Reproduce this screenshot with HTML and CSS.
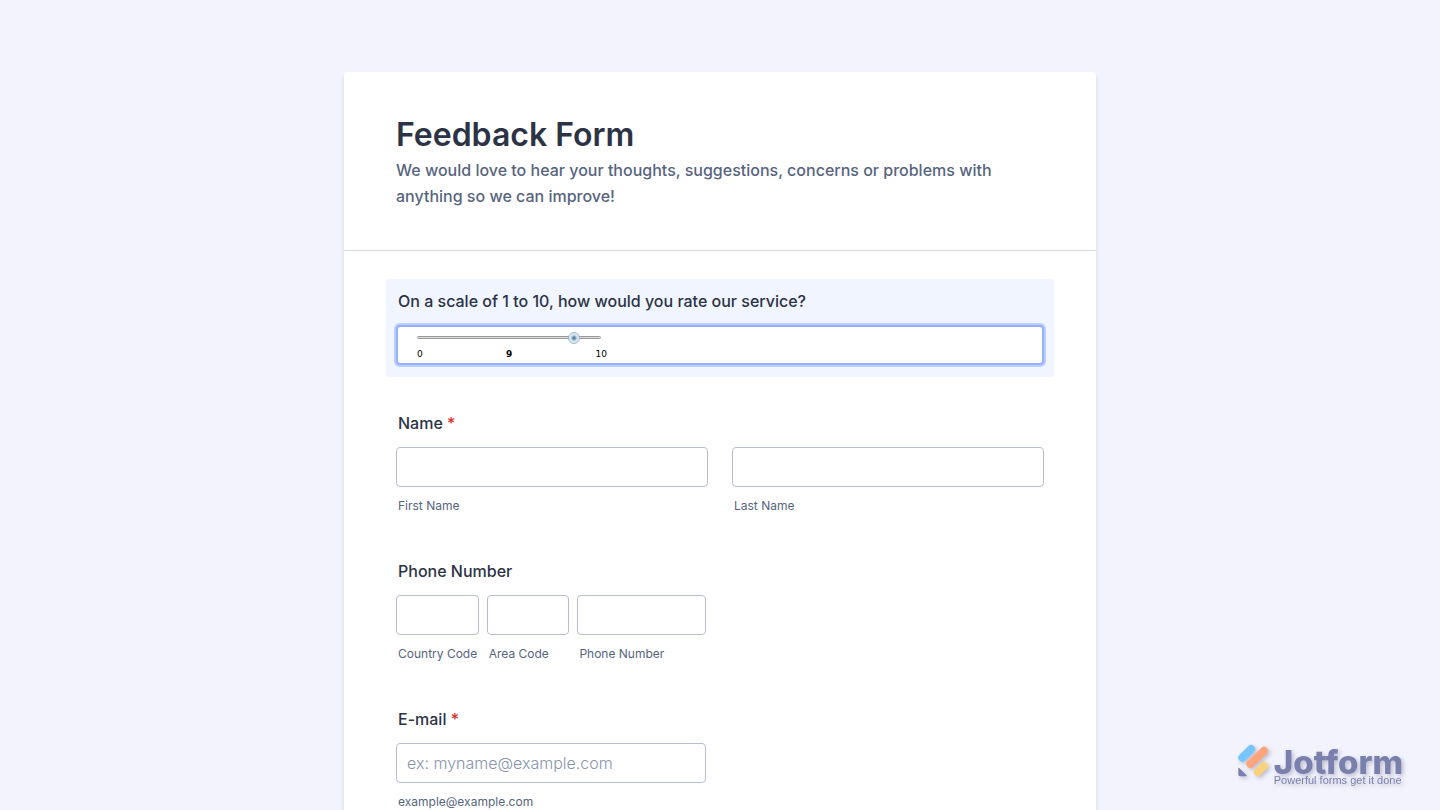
FILE: index.html
```html
<!DOCTYPE html>
<html lang="en">

<head>
    <meta charset="UTF-8">
    <meta name="viewport" content="width=device-width, initial-scale=1.0">
    <title>Feedback Form</title>
    <link rel="stylesheet" href="styles.css">
</head>

<body>
    <form class="form">
        <header class="form-header">
            <h1>Feedback Form</h1>
            <p>We would love to hear your thoughts, suggestions, concerns or problems with anything so we can improve!</p>
        </header>
        <div class="form-body">
            <div class="question active">
                <label class="question-label" for="rating">On a scale of 1 to 10, how would you rate our service?</label>
                <div class="slider-box">
                    <input type="range" class="slider" id="rating" min="0" max="10" step="0.1" value="8.8">
                    <div class="slider-values">
                        <span>0</span>
                        <output for="rating" id="rating-value">9</output>
                        <span>10</span>
                    </div>
                </div>
            </div>

            <div class="question" role="group" aria-labelledby="name-label">
                <div class="question-label" id="name-label">Name <span class="required">*</span></div>
                <div class="fields name-fields">
                    <div class="field">
                        <input type="text" id="first-name" required>
                        <label for="first-name">First Name</label>
                    </div>
                    <div class="field">
                        <input type="text" id="last-name" required>
                        <label for="last-name">Last Name</label>
                    </div>
                </div>
            </div>

            <div class="question" role="group" aria-labelledby="phone-label">
                <div class="question-label" id="phone-label">Phone Number</div>
                <div class="fields phone-fields">
                    <div class="field">
                        <input type="tel" id="country-code">
                        <label for="country-code">Country Code</label>
                    </div>
                    <div class="field">
                        <input type="tel" id="area-code">
                        <label for="area-code">Area Code</label>
                    </div>
                    <div class="field">
                        <input type="tel" id="phone-number">
                        <label for="phone-number">Phone Number</label>
                    </div>
                </div>
            </div>

            <div class="question">
                <label class="question-label" for="email">E-mail <span class="required">*</span></label>
                <div class="fields email-fields">
                    <div class="field">
                        <input type="email" id="email" placeholder="ex: myname@example.com" required>
                        <label for="email">example@example.com</label>
                    </div>
                </div>
            </div>
        </div>
    </form>

    <div class="brand">
        <svg class="brand-icon" width="32" height="36" viewBox="0 0 32 36" aria-hidden="true">
            <g fill="none" stroke-width="8" stroke-linecap="round">
                <path stroke="#76c5ff" d="M4.300 13.700 L13 5"/>
                <path stroke="#ffa57c" d="M12.300 20 L26 6.800"/>
                <path stroke="#fad27e" d="M19.800 28 L26 22"/>
            </g>
            <path fill="#7a80ae" d="M0.300 24.500 V30.300 Q0.300 32.300 2.300 32.300 H7.500 Q9.500 32.300 8 30.800 L1.500 24.200 Q0.300 23 0.300 24.500Z"/>
        </svg>
        <div class="brand-text">
            <span class="brand-name">Jotform</span>
            <span class="brand-tagline">Powerful forms get it done</span>
        </div>
    </div>

    <script>
        var rating = document.getElementById("rating");
        rating.addEventListener("input", function () {
            document.getElementById("rating-value").textContent = Math.round(rating.value);
        });
    </script>
</body>

</html>
```

FILE: styles.css
```css
* {
    box-sizing: border-box;
}

body {
    margin: 0;
    padding: 72px 16px;
    background-color: #f3f3fe;
    color: #2c3345;
    font-family: Inter, sans-serif;
    font-size: 16px;
}

.form {
    max-width: 752px;
    margin: 0 auto;
    background-color: #fff;
    border-radius: 3px;
    box-shadow: 0 4px 4px rgba(87, 100, 126, 0.2);
}

.form-header {
    padding: 41px 52px;
    border-bottom: 1px solid #d7d8e1;
}

.form-header h1 {
    margin: 0;
    font-size: 32px;
    font-weight: 600;
    line-height: 44px;
}

.form-header p {
    margin: 0;
    color: #57647e;
    font-weight: 500;
    line-height: 26px;
}

.form-body {
    display: flex;
    flex-direction: column;
    gap: 24px;
    padding: 28px 42px;
}

.question {
    padding: 12px 10px;
    border-radius: 3px;
}

.question.active {
    background-color: #f0f5ff;
}

.question-label {
    display: block;
    margin-bottom: 14px;
    padding-left: 2px;
    font-weight: 500;
    line-height: 20px;
}

.required {
    color: #e0282e;
}

/* Slider */
.slider-box {
    height: 40px;
    padding: 4px 19px;
    background-color: #fff;
    border: 2px solid #94b1ff;
    border-radius: 4px;
    box-shadow: 0 0 0 2px #bccffc;
}

.slider {
    -webkit-appearance: none;
    appearance: none;
    display: block;
    width: 184px;
    height: 12px;
    margin: 0;
    background: transparent;
    outline: none;
}

.slider::-webkit-slider-runnable-track {
    height: 3px;
    border: 1px solid #999;
    border-radius: 2px;
    background-color: #ddd;
}

.slider::-webkit-slider-thumb {
    -webkit-appearance: none;
    width: 12px;
    height: 12px;
    margin-top: -5px;
    border: 1px solid #a5b4c4;
    border-radius: 50%;
    background: radial-gradient(circle, #5f82a0 0 1px, #c9dfef 3px, #e4f1fb 5px);
}

.slider-values {
    display: flex;
    justify-content: space-between;
    width: 190px;
    margin-top: 5px;
    color: #000;
    font-family: "DejaVu Sans", sans-serif;
    font-size: 9px;
    line-height: 12px;
}

.slider-values output {
    font-weight: bold;
}

/* Fields */
.fields {
    display: grid;
}

.name-fields {
    grid-template-columns: 1fr 1fr;
    gap: 24px;
}

.phone-fields {
    grid-template-columns: 9fr 9fr 14fr;
    gap: 8px;
    max-width: 310px;
}

.email-fields {
    max-width: 310px;
}

.field {
    min-width: 0;
}

.field input {
    display: block;
    width: 100%;
    height: 40px;
    padding: 0 10px;
    border: 1px solid #b8bdd0;
    border-radius: 4px;
    background-color: #fff;
    color: #2c3345;
    font-family: inherit;
    font-size: 16px;
}

.field input::placeholder {
    color: #8894ab;
    font-weight: 300;
}

.field label {
    display: block;
    margin-top: 12px;
    padding-left: 2px;
    color: #57647e;
    font-size: 12px;
    line-height: 14px;
    white-space: nowrap;
}

/* Logo in the corner */
.brand {
    position: fixed;
    right: 37px;
    bottom: 24px;
    display: flex;
    gap: 4px;
    color: #7a80ae;
    filter: drop-shadow(2px 2px 2px rgba(60, 60, 90, 0.3));
}

.brand-text {
    display: flex;
    flex-direction: column;
}

.brand-name {
    font-size: 33px;
    font-weight: 800;
    line-height: 36px;
}

.brand-tagline {
    margin-top: -6px;
    font-family: "Liberation Sans", sans-serif;
    font-size: 11px;
    line-height: 12px;
}
```
